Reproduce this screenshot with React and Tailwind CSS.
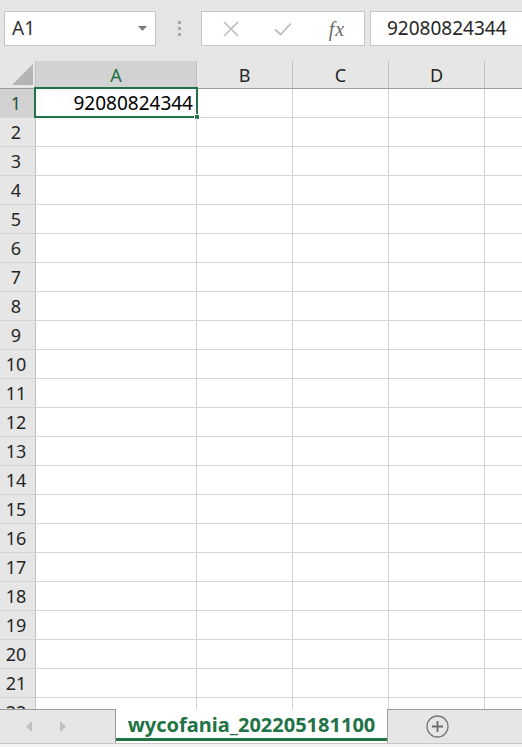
import React from "react";

const rows = Array.from({ length: 22 }, (_, i) => i + 1);

function Cell({ w, children, selected }) {
  return (
    <div
      className={`relative shrink-0 h-full border-r border-[#d4d4d4] ${w}`}
    >
      {children}
      {selected && (
        <div className="absolute left-[-2px] top-[-2px] right-[-2px] bottom-[-1px] border-2 border-[#217346]">
          <div className="absolute right-[-4px] bottom-[-4px] w-[6px] h-[6px] bg-[#217346] border border-white" />
        </div>
      )}
    </div>
  );
}

export default function App() {
  return (
    <div className="w-[522px] h-[747px] overflow-hidden flex flex-col bg-[#e6e6e6] font-['Noto_Sans',sans-serif] text-[#262626] select-none">
      {/* Formula bar */}
      <div className="h-[61px] shrink-0 flex items-start pt-[11px] pl-[4px]">
        <div className="w-[152px] h-[35px] bg-white border border-[#c6c6c6] flex items-center pl-[7px] pr-[8px]">
          <span className="text-[19px] leading-none text-[#333]">A1</span>
          <svg className="ml-auto" width="9" height="5" viewBox="0 0 9 5">
            <path d="M0 0 L9 0 L4.5 5 Z" fill="#7a7a7a" />
          </svg>
        </div>
        <div className="w-[45px] h-[35px] flex flex-col items-center justify-center gap-[3px] pl-[1px]">
          <div className="w-[3px] h-[3px] bg-[#a8a8a8]" />
          <div className="w-[3px] h-[3px] bg-[#a8a8a8]" />
          <div className="w-[3px] h-[3px] bg-[#a8a8a8]" />
        </div>
        <div className="w-[164px] h-[35px] bg-white border border-[#c6c6c6] flex items-center">
          <div className="w-[54px] flex justify-center pl-[4px]">
            <svg width="16" height="16" viewBox="0 0 16 16">
              <path d="M1 1 L15 15 M15 1 L1 15" stroke="#bdbdbd" strokeWidth="1.6" fill="none" />
            </svg>
          </div>
          <div className="w-[54px] flex justify-center">
            <svg width="18" height="14" viewBox="0 0 18 14">
              <path d="M1 7.5 L6.5 12.5 L17 1.5" stroke="#bdbdbd" strokeWidth="1.8" fill="none" />
            </svg>
          </div>
          <div className="w-[54px] flex justify-center">
            <span className="font-['Liberation_Serif',serif] italic text-[20px] leading-none text-[#6b6b6b] tracking-[1px]">
              fx
            </span>
          </div>
        </div>
        <div className="ml-[5px] flex-1 h-[35px] bg-white border border-[#c6c6c6] border-r-0 flex items-center pl-[16px]">
          <span className="text-[19px] leading-none text-[#262626]">92080824344</span>
        </div>
      </div>

      {/* Grid */}
      <div className="flex-1 overflow-hidden bg-white flex flex-col">
        {/* column header */}
        <div className="h-[28px] shrink-0 flex bg-[#e6e6e6] border-b border-[#9c9c9c] text-[18px] leading-none">
          <div className="w-[36px] shrink-0 h-full border-r border-[#c0c0c0] flex items-end justify-end pr-[2px] pb-[3px]">
            <svg width="21" height="21" viewBox="0 0 21 21">
              <path d="M21 0 L21 21 L0 21 Z" fill="#b4b4b4" />
            </svg>
          </div>
          <div className="w-[161px] shrink-0 h-full bg-[#d2d2d2] border-r border-[#c0c0c0] flex items-center justify-center text-[#217346]">
            A
          </div>
          <div className="w-[96px] shrink-0 h-full border-r border-[#c0c0c0] flex items-center justify-center">B</div>
          <div className="w-[96px] shrink-0 h-full border-r border-[#c0c0c0] flex items-center justify-center">C</div>
          <div className="w-[96px] shrink-0 h-full border-r border-[#c0c0c0] flex items-center justify-center">D</div>
          <div className="flex-1" />
        </div>
        {rows.map((r) => (
          <div key={r} className="h-[29px] shrink-0 flex border-b border-[#d4d4d4]">
            <div
              className={`w-[36px] shrink-0 h-full border-r border-[#c0c0c0] flex items-center justify-center pr-[3px] text-[18px] leading-none ${
                r === 1 ? "bg-[#d2d2d2] text-[#1f5234]" : "bg-[#e6e6e6] text-[#262626]"
              }`}
            >
              {r}
            </div>
            <Cell w="w-[161px]" selected={r === 1}>
              {r === 1 && (
                <div className="h-full flex items-center justify-end pr-[3px] text-[19px] leading-none text-[#000]">
                  92080824344
                </div>
              )}
            </Cell>
            <Cell w="w-[96px]" />
            <Cell w="w-[96px]" />
            <Cell w="w-[96px]" />
            <div className="flex-1" />
          </div>
        ))}
      </div>

      {/* Sheet tabs */}
      <div className="h-[34px] shrink-0 flex bg-[#e6e6e6]">
        <div className="w-[115px] shrink-0 border-t border-[#9c9c9c] flex items-center pl-[26px] gap-[28px]">
          <svg width="6" height="11" viewBox="0 0 6 11">
            <path d="M6 0 L0 5.5 L6 11 Z" fill="#c0c0c0" />
          </svg>
          <svg width="6" height="11" viewBox="0 0 6 11">
            <path d="M0 0 L6 5.5 L0 11 Z" fill="#c0c0c0" />
          </svg>
        </div>
        <div className="w-[273px] shrink-0 bg-white border-l border-r border-[#9c9c9c] flex flex-col">
          <div className="flex-1 flex items-center justify-center pt-[2px]">
            <span className="text-[20px] font-bold leading-none text-[#217346]">wycofania_202205181100</span>
          </div>
          <div className="h-[3px] bg-[#217346] mb-[2px]" />
        </div>
        <div className="flex-1 border-t border-[#9c9c9c] flex items-center pl-[38px]">
          <svg width="23" height="23" viewBox="0 0 23 23">
            <circle cx="11.5" cy="11.5" r="10.5" stroke="#7a7a7a" strokeWidth="1.3" fill="none" />
            <path d="M11.5 6 L11.5 17 M6 11.5 L17 11.5" stroke="#6e6e6e" strokeWidth="1.8" />
          </svg>
        </div>
      </div>
      <div className="h-[4px] shrink-0 bg-[#f3f3f3] border-t border-[#c6c6c6]" />
    </div>
  );
}
